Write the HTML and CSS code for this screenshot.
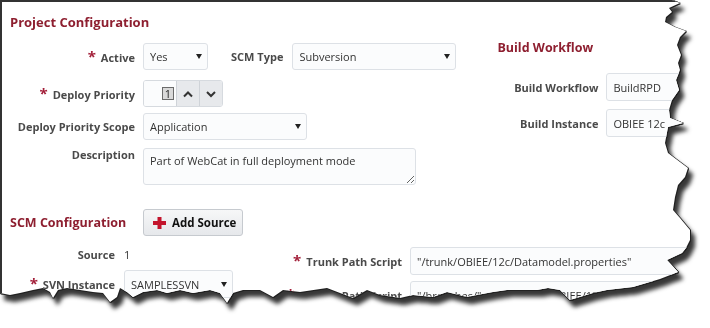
FILE: index.html
```html
<!DOCTYPE html>
<html lang="en">
<head>
    <meta charset="UTF-8">
    <meta name="viewport" content="width=device-width, initial-scale=1.0">
    <title>Project Configuration</title>
    <link rel="stylesheet" href="styles.css">
</head>
<body>

    <div class="sheet">
        <div class="page">

            <div class="top">
                <div class="project">
                    <h2 class="title">Project Configuration</h2>

                    <div class="row row-active">
                        <div class="label"><span class="req">*</span>Active</div>
                        <div class="field select yes">Yes<span class="caret"></span></div>
                        <div class="label inline">SCM Type</div>
                        <div class="field select scm-type">Subversion<span class="caret"></span></div>
                    </div>

                    <div class="row row-priority">
                        <div class="label"><span class="req">*</span>Deploy Priority</div>
                        <div class="spinner">
                            <div class="spin-value"><span class="digit">1</span></div>
                            <div class="spin-btn">
                                <svg width="10" height="8" viewBox="0 0 10 8"><polyline points="1,6.5 5,2.5 9,6.5" fill="none" stroke="#333" stroke-width="2"/></svg>
                            </div>
                            <div class="spin-btn">
                                <svg width="10" height="8" viewBox="0 0 10 8"><polyline points="1,2 5,6 9,2" fill="none" stroke="#333" stroke-width="2"/></svg>
                            </div>
                        </div>
                    </div>

                    <div class="row row-scope">
                        <div class="label">Deploy Priority Scope</div>
                        <div class="field select scope">Application<span class="caret"></span></div>
                    </div>

                    <div class="row row-desc">
                        <div class="label">Description</div>
                        <textarea class="textarea" readonly>Part of WebCat in full deployment mode</textarea>
                    </div>
                </div>

                <div class="build">
                    <h3 class="subtitle">Build Workflow</h3>
                    <div class="row build-row">
                        <div class="label">Build Workflow</div>
                        <div class="field build-input">BuildRPD</div>
                    </div>
                    <div class="row build-row second">
                        <div class="label">Build Instance</div>
                        <div class="field build-input">OBIEE 12c</div>
                    </div>
                </div>
            </div>

            <div class="scm">
                <div class="scm-head">
                    <h3 class="subtitle scm-title">SCM Configuration</h3>
                    <button class="btn">
                        <svg width="13" height="12" viewBox="0 0 13 12"><rect x="0" y="4" width="13" height="4" fill="#c3142c"/><rect x="4.5" y="0" width="4" height="12" fill="#c3142c"/></svg>
                        Add Source
                    </button>
                </div>

                <div class="scm-body">
                    <div class="scm-left">
                        <div class="row source-row">
                            <div class="label">Source</div>
                            <div class="value">1</div>
                        </div>
                        <div class="row svn-row">
                            <div class="label"><span class="req">*</span>SVN Instance</div>
                            <div class="field select svn">SAMPLESSVN<span class="caret"></span></div>
                        </div>
                    </div>
                    <div class="scm-right">
                        <div class="row">
                            <div class="label"><span class="req">*</span>Trunk Path Script</div>
                            <div class="field path">"/trunk/OBIEE/12c/Datamodel.properties"</div>
                        </div>
                        <div class="row branch-row">
                            <div class="label"><span class="req">*</span>Branch Path Script</div>
                            <div class="field path">"/branches/" + Stream + "/OBIEE/12c/Datamodel.properties"</div>
                        </div>
                    </div>
                </div>
            </div>

        </div>
    </div>

</body>
</html>
```

FILE: styles.css
```css
body {
    margin: 0;
    background-color: #fff;
    font-family: 'Open Sans', 'Liberation Sans', sans-serif;
    color: #4a4a4a;
}

/* torn paper look: outline + soft shadow follow the clipped page */
.sheet {
    width: 710px;
    height: 328px;
    filter: drop-shadow(1px 0 0 #222) drop-shadow(0 1px 0 #222) drop-shadow(4px 6px 2px rgba(20, 20, 20, 0.85));
}

.page {
    box-sizing: border-box;
    width: 710px;
    height: 328px;
    padding: 11px 0 0 8px;
    background-color: #fff;
    border-top: 2px solid #333;
    border-left: 2px solid #333;
    overflow: hidden;
    clip-path: polygon(0px 0px, 672px 0px, 680px 3px, 669px 8px, 672px 12px, 666px 17px, 665px 22px, 675px 27px, 686px 31px, 680px 37px, 677px 45px, 681px 55px, 678px 63px, 680px 70px, 676px 80px, 679px 90px, 672px 100px, 669px 110px, 670px 118px, 683px 123px, 668px 127px, 665px 143px, 668px 153px, 680px 162px, 688px 168px, 685px 177px, 678px 185px, 675px 197px, 673px 210px, 680px 218px, 690px 230px, 690px 240px, 686px 248px, 682px 253px, 667px 260px, 678px 272px, 660px 279px, 633px 287px, 607px 290px, 593px 293px, 570px 300px, 560px 290px, 548px 288px, 537px 290px, 507px 290px, 493px 292px, 477px 295px, 467px 297px, 447px 292px, 433px 297px, 413px 295px, 400px 298px, 380px 295px, 367px 290px, 353px 298px, 340px 293px, 327px 288px, 300px 292px, 283px 290px, 273px 297px, 260px 290px, 243px 290px, 233px 293px, 227px 303px, 220px 293px, 210px 290px, 193px 293px, 180px 290px, 167px 293px, 157px 290px, 143px 292px, 133px 297px, 127px 292px, 120px 288px, 117px 297px, 110px 302px, 103px 293px, 93px 292px, 80px 290px, 67px 288px, 58px 290px, 53px 298px, 50px 292px, 43px 288px, 33px 290px, 20px 293px, 10px 295px, 0px 293px);
}

.top {
    display: flex;
    gap: 41px;
}

.project {
    width: 447px;
}

.title {
    margin: 0;
    font-size: 13px;
    line-height: 18px;
    font-weight: bold;
    color: #8e1f30;
}

.subtitle {
    margin: 0;
    font-size: 12.5px;
    line-height: 17px;
    font-weight: bold;
    color: #8e1f30;
}

.row {
    display: flex;
    align-items: center;
}

.label {
    width: 125px;
    margin-right: 8px;
    display: flex;
    justify-content: flex-end;
    align-items: baseline;
    font-size: 11px;
    line-height: 15px;
    font-weight: bold;
    color: #4a4a4a;
    white-space: nowrap;
}

.label.inline {
    width: auto;
    margin-left: 23px;
    margin-right: 9px;
}

.req {
    margin-right: 5px;
    font-size: 15px;
    line-height: 15px;
    color: #a3203a;
}

.field {
    box-sizing: border-box;
    height: 27px;
    padding: 0 6px;
    display: flex;
    align-items: center;
    border: 1px solid #dde1e6;
    border-radius: 3px;
    background-color: #fbfcfd;
    font-size: 11px;
    color: #333;
    white-space: nowrap;
    overflow: hidden;
}

.select {
    justify-content: space-between;
    padding-right: 5px;
}

.caret {
    width: 0;
    height: 0;
    border-left: 3px solid transparent;
    border-right: 3px solid transparent;
    border-top: 5px solid #222;
}

.row-active {
    margin-top: 12px;
}

.yes {
    width: 65px;
}

.scm-type {
    width: 164px;
}

.row-priority {
    margin-top: 10px;
}

.spinner {
    box-sizing: border-box;
    width: 80px;
    height: 27px;
    display: flex;
    border: 1px solid #d6dadf;
    border-radius: 3px;
    overflow: hidden;
}

.spin-value {
    flex: 0 0 32px;
    box-sizing: border-box;
    padding-right: 2px;
    display: flex;
    justify-content: flex-end;
    align-items: center;
    background-color: #fbfcfd;
}

.digit {
    width: 10px;
    height: 11px;
    border: 1px solid #6b6b6b;
    background-color: #d9d9d9;
    font-size: 11px;
    line-height: 11px;
    text-align: center;
    color: #222;
}

.spin-btn {
    flex: 1;
    display: flex;
    justify-content: center;
    align-items: center;
    border-left: 1px solid #cfd3d8;
    background-color: #e7e9ec;
}

.row-scope {
    margin-top: 6px;
}

.scope {
    width: 164px;
}

.row-desc {
    margin-top: 8px;
    align-items: flex-start;
}

.row-desc .label {
    margin-top: -1px;
}

.textarea {
    box-sizing: border-box;
    width: 273px;
    height: 37px;
    margin: 0;
    padding: 4px 6px;
    border: 1px solid #dde1e6;
    border-radius: 3px;
    background-color: #fbfcfd;
    font-family: 'Open Sans', 'Liberation Sans', sans-serif;
    font-size: 11px;
    line-height: 15px;
    color: #333;
    outline: none;
}

.build {
    padding-top: 26px;
}

.build .label {
    width: 101px;
}

.build-row {
    margin-top: 17px;
}

.build-row.second {
    margin-top: 8px;
}

.build-input {
    width: 120px;
    height: 28px;
}

.scm-head {
    margin-top: 24px;
    display: flex;
    align-items: center;
}

.scm-title {
    width: 133px;
}

.btn {
    box-sizing: border-box;
    width: 100px;
    height: 27px;
    padding: 0 0 0 9px;
    display: flex;
    align-items: center;
    gap: 6px;
    border: 1px solid #c6cacf;
    border-radius: 3px;
    background: linear-gradient(#f6f7f8, #e6e8eb);
    font-family: 'Open Sans', 'Liberation Sans', sans-serif;
    font-size: 11.5px;
    font-weight: bold;
    color: #111;
}

.scm-body {
    margin-top: 11px;
    display: flex;
}

.scm-left {
    width: 230px;
}

.scm-left .label {
    width: 105px;
    margin-right: 9px;
}

.value {
    font-size: 11px;
    line-height: 15px;
    color: #333;
}

.svn-row {
    margin-top: 8px;
}

.svn {
    width: 109px;
    height: 28px;
}

.scm-right .label {
    width: 162px;
}

.path {
    width: 300px;
    height: 28px;
}

.branch-row {
    margin-top: 6px;
}
```
